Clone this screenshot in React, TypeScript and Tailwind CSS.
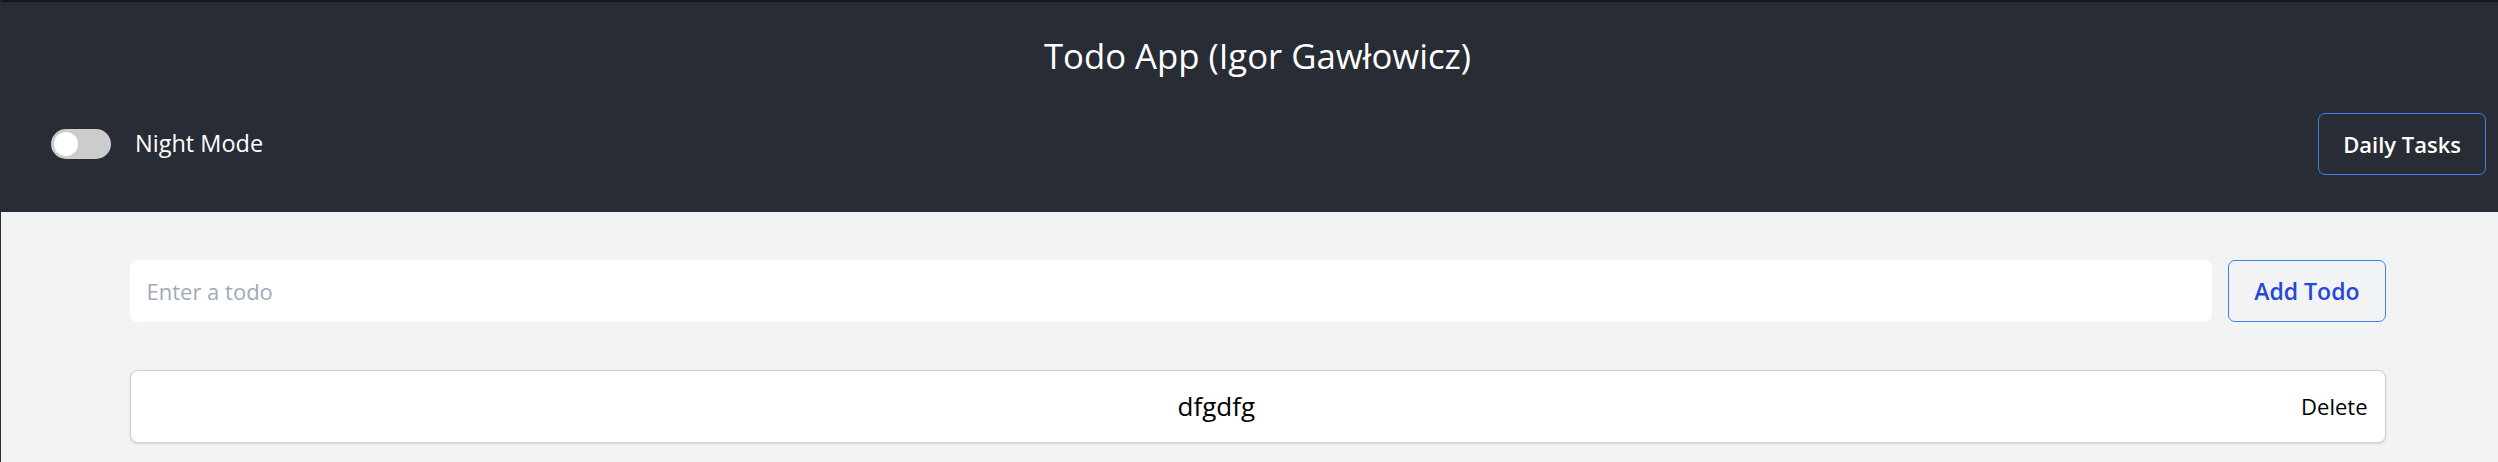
import { useState } from "react";

type Todo = {
  id: number;
  text: string;
};

export default function App() {
  const [todos, setTodos] = useState<Todo[]>([{ id: 1, text: "dfgdfg" }]);
  const [input, setInput] = useState("");
  const [night, setNight] = useState(false);

  const addTodo = () => {
    if (!input.trim()) return;
    setTodos([...todos, { id: Date.now(), text: input }]);
    setInput("");
  };

  const deleteTodo = (id: number) => {
    setTodos(todos.filter((t) => t.id !== id));
  };

  return (
    <div className="min-h-[462px] bg-[#f2f3f5] border-l border-[#2a2d33] font-['Open_Sans',sans-serif]">
      {/* Header */}
      <header className="h-[212px] bg-[#282c34] border-t-2 border-[#15171c] text-white">
        <h1 className="pl-4 pt-[31px] text-center text-[34.7px] leading-[46px]">Todo App (Igor Gawłowicz)</h1>
        <div className="mt-[34px] flex items-center justify-between pl-[50px] pr-[12px]">
          <label className="flex items-center gap-6 cursor-pointer">
            <button
              onClick={() => setNight(!night)}
              className="relative w-[60px] h-[30px] rounded-full bg-[#cccccc]"
            >
              <span className="absolute left-[3px] top-[3px] w-[24px] h-[24px] rounded-full bg-white" />
            </button>
            <span className="text-[23.5px]">Night Mode</span>
          </label>
          <button className="h-[62px] px-[24px] rounded-[7px] border border-[#3b7fe6] text-[22px] font-semibold">
            Daily Tasks
          </button>
        </div>
      </header>

      {/* Main */}
      <main className="pl-4 pt-[48px] pb-[19px]">
        <div className="mx-auto max-w-[2256px]">
          <div className="flex gap-4">
            <input
              value={input}
              onChange={(e) => setInput(e.target.value)}
              placeholder="Enter a todo"
              className="flex-1 h-[62px] px-[17px] rounded-[8px] bg-white text-[22px] outline-none placeholder:text-[#9faabb]"
            />
            <button
              onClick={addTodo}
              className="h-[62px] px-[25px] rounded-[7px] border border-[#3b82f6] text-[23px] font-semibold text-[#2748d6]"
            >
              Add Todo
            </button>
          </div>

          <ul className="mt-[48px]">
            {todos.map((todo) => (
              <li
                key={todo.id}
                className="flex items-center h-[73px] px-[17px] bg-white border border-[#cfcfcf] rounded-[8px] shadow-sm"
              >
                <span className="flex-1 text-center text-[26px] text-black">{todo.text}</span>
                <button onClick={() => deleteTodo(todo.id)} className="ml-4 text-[22px] text-black">
                  Delete
                </button>
              </li>
            ))}
          </ul>
        </div>
      </main>
    </div>
  );
}
